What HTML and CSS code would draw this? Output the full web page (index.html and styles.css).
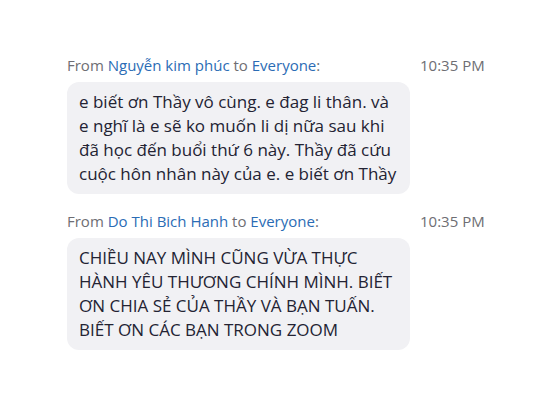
FILE: index.html
```html
<!DOCTYPE html>
<html>
<head>
<meta charset="utf-8">
<link rel="stylesheet" href="styles.css">
</head>
<body>
<div class="chat">
  <div class="msg">
    <div class="head">
      <div class="who">From <span class="name">Nguyễn kim phúc</span> to <span class="name">Everyone</span>:</div>
      <div class="time">10:35 PM</div>
    </div>
    <div class="bubble">e biết ơn Thầy vô cùng. e đag li thân. và<br>e nghĩ là e sẽ ko muốn li dị nữa sau khi<br>đã học đến buổi thứ 6 này. Thầy đã cứu<br>cuộc hôn nhân này của e. e biết ơn Thầy</div>
  </div>
  <div class="msg">
    <div class="head">
      <div class="who">From <span class="name">Do Thi Bich Hanh</span> to <span class="name">Everyone</span>:</div>
      <div class="time">10:35 PM</div>
    </div>
    <div class="bubble">CHIỀU NAY MÌNH CŨNG VỪA THỰC<br>HÀNH YÊU THƯƠNG CHÍNH MÌNH. BIẾT<br>ƠN CHIA SẺ CỦA THẦY VÀ BẠN TUẤN.<br>BIẾT ƠN CÁC BẠN TRONG ZOOM</div>
  </div>
</div>
</body>
</html>
```
FILE: styles.css
```css
html, body {
  margin: 0;
  padding: 0;
  background: #ffffff;
}
body {
  width: 533px;
  height: 400px;
  overflow: hidden;
  font-family: "Open Sans", "Noto Sans", sans-serif;
}
.chat {
  padding: 55px 0 0 67px;
  display: flex;
  flex-direction: column;
  gap: 17px;
}
.head {
  display: flex;
  align-items: center;
  height: 20px;
  font-size: 15px;
  color: #6e6e73;
}
.who {
  width: 353px;
  white-space: nowrap;
}
.name {
  color: #2b6cb5;
}
.time {
  color: #6e6e73;
  font-size: 15px;
}
.bubble {
  margin-top: 7px;
  width: 343px;
  box-sizing: border-box;
  padding: 8px 12px 8px;
  background: #f1f1f4;
  border-radius: 12px;
  font-size: 17px;
  line-height: 24px;
  color: #232333;
  white-space: nowrap;
}
```
